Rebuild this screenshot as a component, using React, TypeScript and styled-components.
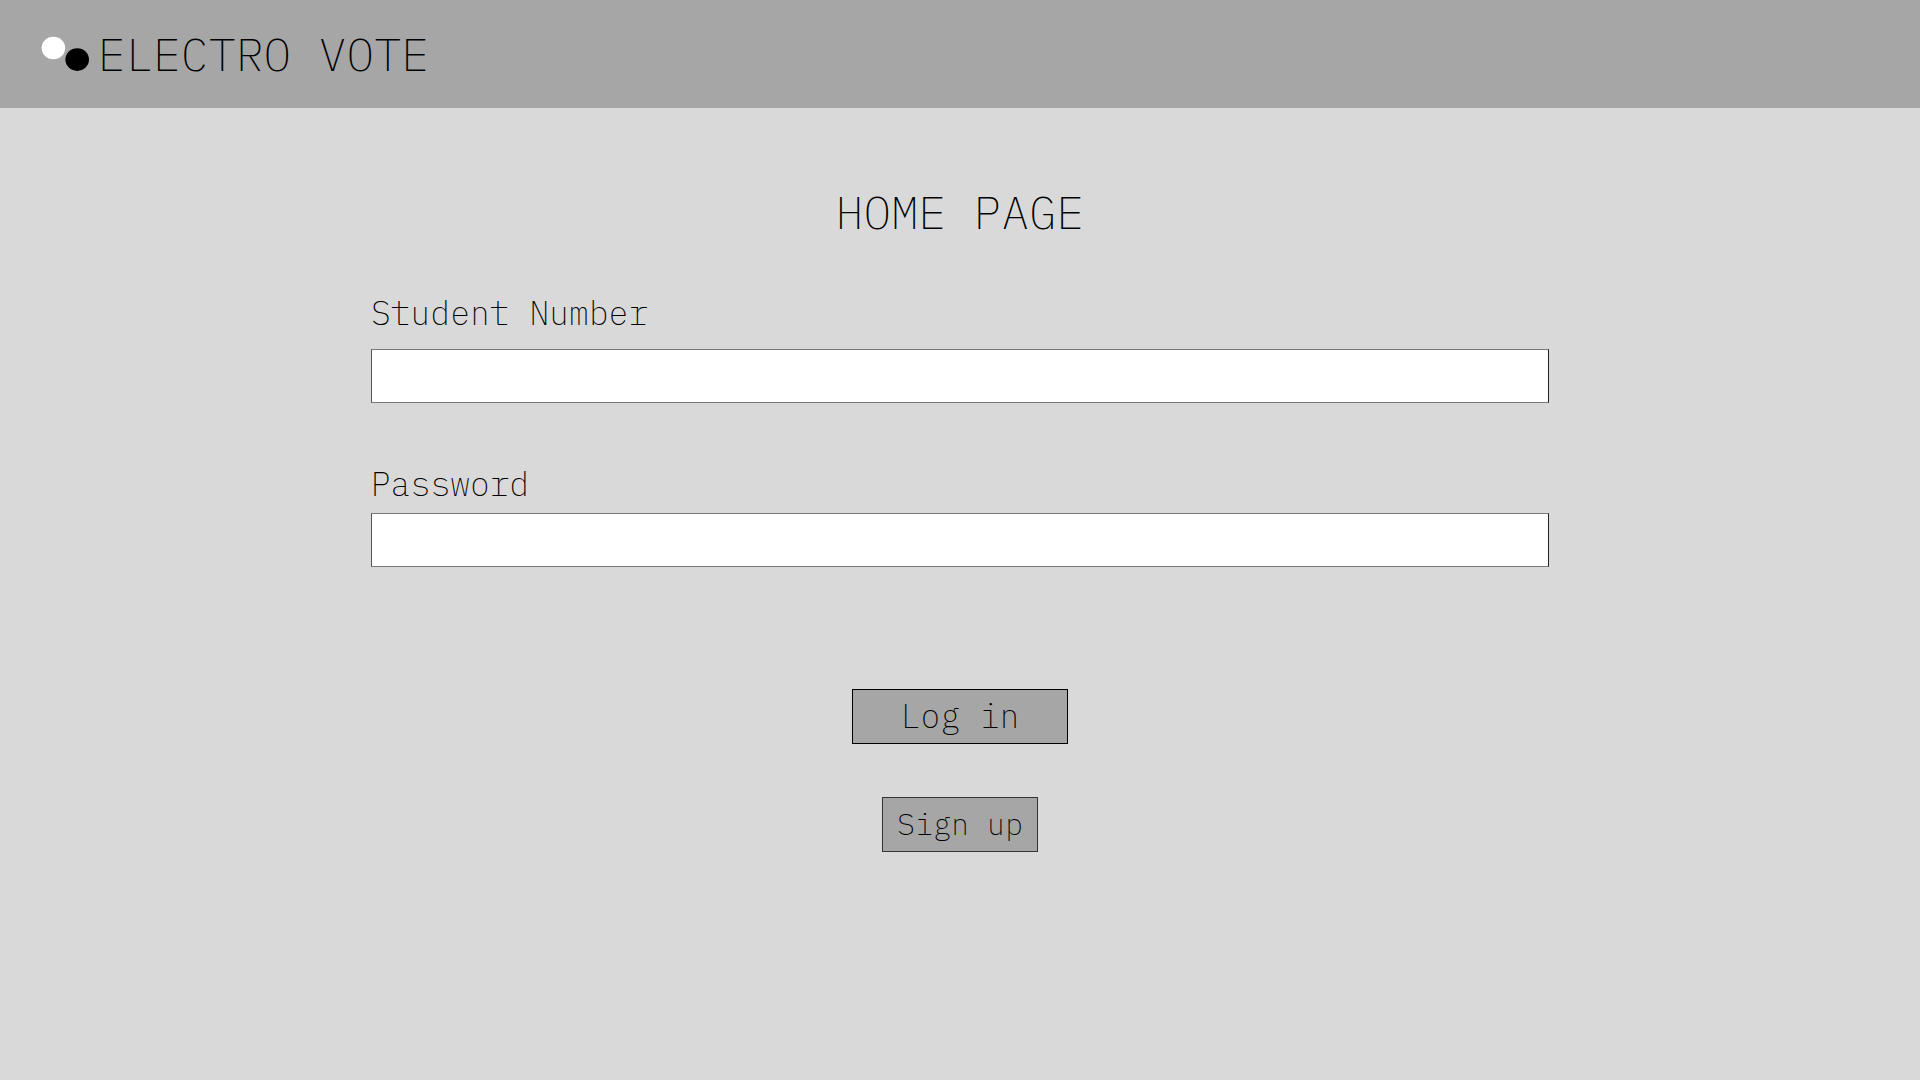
import React from "react";
import styled, { createGlobalStyle } from "styled-components";

const colors = {
  page: "#d9d9d9",
  bar: "#a6a6a6",
  ink: "#000000",
};

const GlobalStyle = createGlobalStyle`
  *, *::before, *::after {
    box-sizing: border-box;
  }
  body {
    margin: 0;
    min-height: 100vh;
    background: ${colors.page};
    color: ${colors.ink};
    font-family: "IBM Plex Mono", "Liberation Mono", monospace;
    font-weight: 200;
  }
`;

const Header = styled.header`
  display: flex;
  align-items: baseline;
  gap: 8px;
  padding: 26px 41px;
  background: ${colors.bar};
`;

const Heading = styled.span`
  margin: 0;
  font-size: 46px;
  line-height: 56px;
  font-weight: 200;
`;

const Logo = styled.svg`
  display: block;
  flex: none;
`;

const Main = styled.main`
  display: flex;
  flex-direction: column;
  align-items: center;
  padding: 76px 24px;
`;

const Form = styled.form`
  display: flex;
  flex-direction: column;
  align-items: center;
  width: 100%;
  max-width: 1178px;
  margin-top: 53px;
`;

const Field = styled.div<{ $gap: number }>`
  display: flex;
  flex-direction: column;
  gap: ${(p) => p.$gap}px;
  width: 100%;

  & + & {
    margin-top: 61px;
  }
`;

const Label = styled.label`
  font-size: 33px;
  line-height: 40px;
`;

const TextBox = styled.input`
  width: 100%;
  height: 54px;
  padding: 0 12px;
  border: 1px solid #777777;
  border-left-color: #555555;
  border-right-color: #222222;
  border-radius: 0;
  background: #ffffff;
  font: inherit;
  font-size: 33px;
`;

const Actions = styled.div`
  display: flex;
  flex-direction: column;
  align-items: center;
  gap: 53px;
  margin-top: 122px;
`;

const Button = styled.button<{ $small?: boolean }>`
  width: ${(p) => (p.$small ? 156 : 216)}px;
  height: 55px;
  padding: 0 0 1px;
  border: 1px solid ${(p) => (p.$small ? "#333333" : "#000000")};
  border-radius: 0;
  background: ${colors.bar};
  color: inherit;
  font: inherit;
  font-size: ${(p) => (p.$small ? 30 : 33)}px;
  line-height: 40px;
  cursor: pointer;
`;

export default function App() {
  return (
    <>
      <GlobalStyle />
      <Header>
        <Logo width="49" height="35" viewBox="0 0 49 35" aria-hidden="true">
          <ellipse cx="12.4" cy="12" rx="11.8" ry="11.3" fill="#ffffff" />
          <ellipse cx="36.2" cy="23.6" rx="11.8" ry="11.3" fill="#000000" />
        </Logo>
        <Heading>ELECTRO VOTE</Heading>
      </Header>
      <Main>
        <Heading as="h1">HOME PAGE</Heading>
        <Form onSubmit={(e: React.FormEvent) => e.preventDefault()}>
          <Field $gap={16}>
            <Label htmlFor="student-number">Student Number</Label>
            <TextBox id="student-number" type="text" autoComplete="username" />
          </Field>
          <Field $gap={9}>
            <Label htmlFor="password">Password</Label>
            <TextBox id="password" type="password" autoComplete="current-password" />
          </Field>
          <Actions>
            <Button type="submit">Log in</Button>
            <Button type="button" $small>
              Sign up
            </Button>
          </Actions>
        </Form>
      </Main>
    </>
  );
}
